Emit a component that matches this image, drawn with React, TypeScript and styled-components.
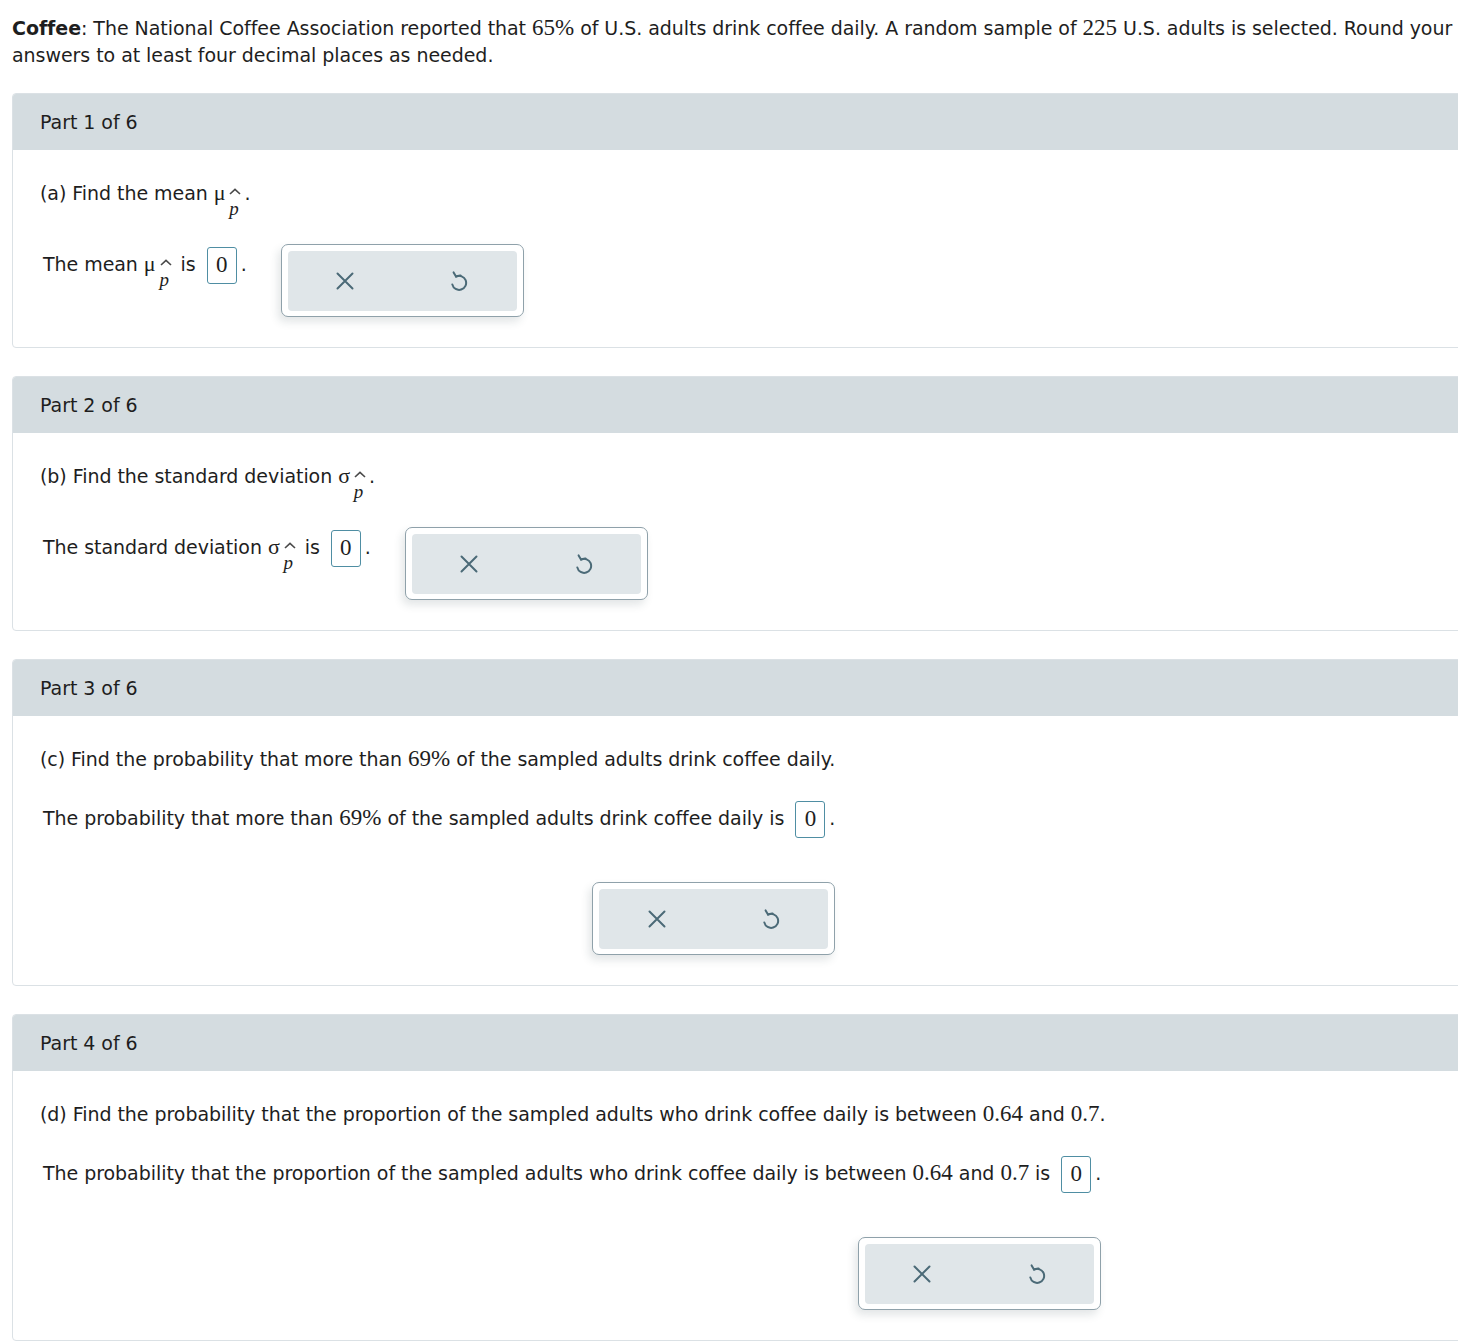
import React from 'react';
import styled, { createGlobalStyle } from 'styled-components';

const GlobalStyle = createGlobalStyle`
  html, body {
    margin: 0;
    padding: 0;
    background: #ffffff;
    overflow-x: hidden;
  }
  body {
    font-family: "DejaVu Sans", Verdana, sans-serif;
    font-size: 19px;
    letter-spacing: -0.05px;
    color: #1e1e1e;
  }
`;

const Page = styled.div`
  padding: 15px 0 0 12px;
  width: 1446px;
`;

const Intro = styled.p`
  margin: 0 0 24px;
  line-height: 27px;
`;

const Card = styled.section`
  width: 1460px;
  border: 1px solid #dbe1e5;
  border-radius: 4px;
  margin-bottom: 28px;
  overflow: hidden;
`;

const CardHeader = styled.div`
  height: 56px;
  display: flex;
  align-items: center;
  padding-left: 27px;
  background: #d4dce0;
`;

const CardBody = styled.div`
  padding: 30px 0 30px 27px;
`;

const Question = styled.p`
  margin: 0 0 25px;
  line-height: 27px;
`;

const AnswerRow = styled.div<{ $stacked?: boolean }>`
  display: inline-flex;
  flex-direction: ${(p) => (p.$stacked ? 'column' : 'row')};
  align-items: ${(p) => (p.$stacked ? 'flex-end' : 'flex-start')};
  gap: ${(p) => (p.$stacked ? '44px' : '34px')};
  margin-left: 3px;
`;

const AnswerText = styled.div`
  padding-top: 3px;
  line-height: 27px;
`;

const MathNum = styled.span`
  font-family: "Liberation Serif", "Times New Roman", serif;
  font-size: 23px;
  line-height: 1;
  letter-spacing: 0;
`;

const Greek = styled.span`
  font-family: "Liberation Serif", "Times New Roman", serif;
  font-size: 22px;
  line-height: 1;
`;

const HatSub = styled.span`
  display: inline-block;
  text-align: center;
  line-height: 1;
  vertical-align: -15px;
  padding-bottom: 2px;
  margin: 0 3px 0 1px;
`;

const Caret = styled.svg`
  display: block;
  margin: 0 auto 5px 3px;
`;

const PItalic = styled.span`
  display: block;
  font-family: "Liberation Serif", "Times New Roman", serif;
  font-style: italic;
  font-size: 19px;
  line-height: 17px;
`;

const InputBox = styled.span`
  display: inline-block;
  box-sizing: border-box;
  width: 30px;
  height: 37px;
  margin: 0 4px 0 5px;
  border: 1px solid #4f8ea3;
  border-radius: 3px;
  text-align: center;
  vertical-align: middle;
  font-family: "Liberation Serif", "Times New Roman", serif;
  font-size: 23px;
  line-height: 34px;
  color: #1e1e1e;
`;

const Toolbar = styled.div`
  box-sizing: border-box;
  width: 243px;
  height: 73px;
  padding: 6px 6px 5px;
  background: #ffffff;
  border: 1px solid #8fa1aa;
  border-radius: 7px;
  box-shadow: -3px 5px 8px rgba(40, 60, 70, 0.13);
`;

const ToolInner = styled.div`
  display: flex;
  height: 60px;
  background: #e0e6e9;
  border-radius: 4px;
`;

const ToolButton = styled.button`
  flex: 1;
  display: flex;
  align-items: center;
  justify-content: center;
  border: none;
  background: transparent;
  color: #4b6a77;
  padding: 0;
  cursor: pointer;
`;

const ClearIcon = () => (
  <svg width="18" height="18" viewBox="0 0 18 18" fill="none" stroke="currentColor" strokeWidth="2" strokeLinecap="round">
    <path d="M1.5 1.5 L16.5 16.5 M16.5 1.5 L1.5 16.5" />
  </svg>
);

const UndoIcon = () => (
  <svg width="18" height="20" viewBox="0 0 18 20" fill="none" stroke="currentColor" strokeWidth="2" strokeLinecap="round" strokeLinejoin="round">
    <path d="M6 5.6 A7 7 0 1 1 2.3 13.4" />
    <path d="M3.6 1.4 L6 5.6 L10.6 4.4" />
  </svg>
);

const Hat = ({ base }: { base: string }) => (
  <>
    <Greek>{base}</Greek>
    <HatSub>
      <Caret width="12" height="7" viewBox="0 0 12 7" fill="none" stroke="#4a4a4a" strokeWidth="1.6">
        <path d="M1 6 L6 1.3 L11 6" />
      </Caret>
      <PItalic>p</PItalic>
    </HatSub>
  </>
);

const Tools = () => (
  <Toolbar>
    <ToolInner>
      <ToolButton aria-label="Clear">
        <ClearIcon />
      </ToolButton>
      <ToolButton aria-label="Undo">
        <UndoIcon />
      </ToolButton>
    </ToolInner>
  </Toolbar>
);

const Answer = ({ children, stacked }: { children: React.ReactNode; stacked?: boolean }) => (
  <AnswerRow $stacked={stacked}>
    <AnswerText>
      {children}{' '}
      <InputBox>0</InputBox>.
    </AnswerText>
    <Tools />
  </AnswerRow>
);

interface PartProps {
  index: number;
  question: React.ReactNode;
  answer: React.ReactNode;
  stacked?: boolean;
}

const Part = ({ index, question, answer, stacked }: PartProps) => (
  <Card>
    <CardHeader>Part {index} of 6</CardHeader>
    <CardBody>
      <Question>{question}</Question>
      <Answer stacked={stacked}>{answer}</Answer>
    </CardBody>
  </Card>
);

export default function App() {
  return (
    <>
      <GlobalStyle />
      <Page>
        <Intro>
          <b>Coffee</b>: The National Coffee Association reported that <MathNum>65%</MathNum> of U.S. adults drink
          coffee daily. A random sample of <MathNum>225</MathNum> U.S. adults is selected. Round your answers to at
          least four decimal places as needed.
        </Intro>

        <Part
          index={1}
          question={
            <>
              (a) Find the mean <Hat base="μ" />.
            </>
          }
          answer={
            <>
              The mean <Hat base="μ" /> is
            </>
          }
        />

        <Part
          index={2}
          question={
            <>
              (b) Find the standard deviation <Hat base="σ" />.
            </>
          }
          answer={
            <>
              The standard deviation <Hat base="σ" /> is
            </>
          }
        />

        <Part
          index={3}
          stacked
          question={
            <>
              (c) Find the probability that more than <MathNum>69%</MathNum> of the sampled adults drink coffee daily.
            </>
          }
          answer={
            <>
              The probability that more than <MathNum>69%</MathNum> of the sampled adults drink coffee daily is
            </>
          }
        />

        <Part
          index={4}
          stacked
          question={
            <>
              (d) Find the probability that the proportion of the sampled adults who drink coffee daily is between{' '}
              <MathNum>0.64</MathNum> and <MathNum>0.7</MathNum>.
            </>
          }
          answer={
            <>
              The probability that the proportion of the sampled adults who drink coffee daily is between{' '}
              <MathNum>0.64</MathNum> and <MathNum>0.7</MathNum> is
            </>
          }
        />
      </Page>
    </>
  );
}
